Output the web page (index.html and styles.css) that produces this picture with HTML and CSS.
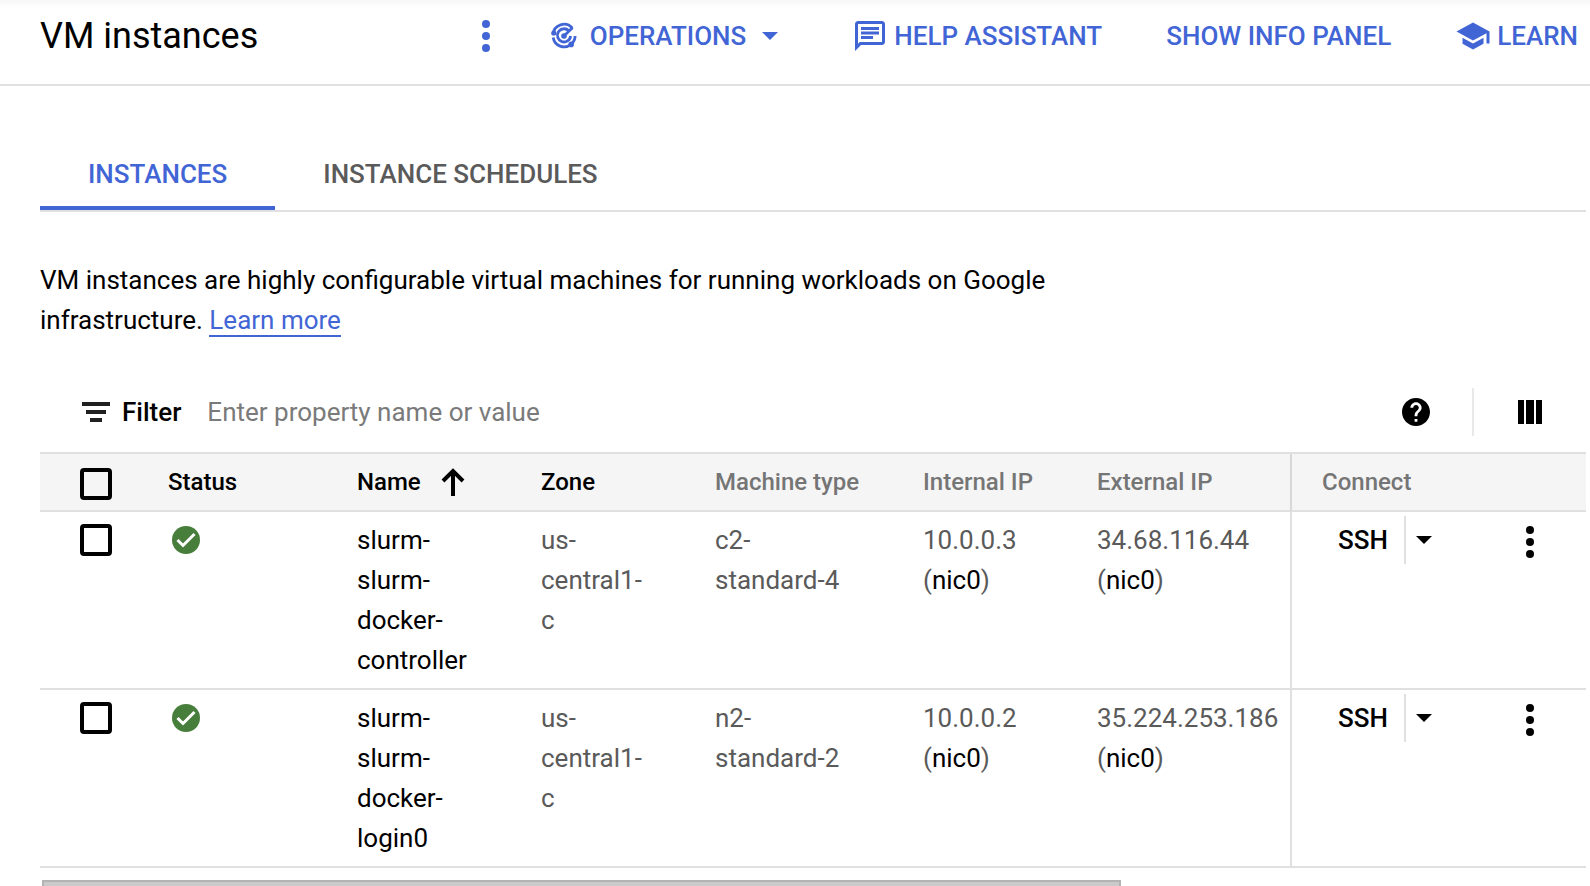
FILE: index.html
```html
<!DOCTYPE html>
<html lang="en">
<head>
<meta charset="utf-8">
<title>VM instances</title>
<link rel="stylesheet" href="styles.css">
</head>
<body>
<header class="topbar">
  <h1 class="title">VM instances</h1>
  <nav class="actions" aria-label="Page actions">
    <button class="action more" type="button" aria-label="More actions">
      <svg class="dots" viewBox="0 0 8 32" aria-hidden="true"><circle cx="4" cy="4" r="4"/><circle cx="4" cy="16" r="4"/><circle cx="4" cy="28" r="4"/></svg>
    </button>
    <button class="action menu" type="button">
      <svg class="icon" viewBox="0 0 36 36" aria-hidden="true">
        <g fill="none" stroke="currentColor" stroke-width="2.8">
          <path d="M26.300 10A11 11 0 0 0 7.100 16.500"/>
          <path d="M7.200 19.500A11 11 0 0 0 25 26.400"/>
          <path d="M25 26.400A11 11 0 0 0 29.100 18"/>
          <path d="M22.800 12.800A6.600 6.600 0 1 0 24.600 18"/>
          <path d="M18 18l8.600-8.400"/>
        </g>
        <circle cx="18" cy="18" r="2.800"/><circle cx="7.800" cy="15" r="2.600"/><circle cx="25.200" cy="26.400" r="2.800"/>
      </svg>
      <span>OPERATIONS</span>
      <svg class="caret" viewBox="0 0 32 32" aria-hidden="true"><path d="M8 12h16l-8 8z"/></svg>
    </button>
    <button class="action snug" type="button">
      <svg class="icon" viewBox="0 0 24 24" aria-hidden="true"><path d="M4 4h16v12H5.200L4 17.200V4m0-2c-1.100 0-1.990.9-1.990 2L2 22l4-4h14c1.100 0 2-.9 2-2V4c0-1.100-.9-2-2-2H4zm2 10h8v2H6v-2zm0-3h12v2H6V9zm0-3h12v2H6V6z"/></svg>
      <span>HELP ASSISTANT</span>
    </button>
    <button class="action" type="button">SHOW INFO PANEL</button>
    <button class="action snug" type="button">
      <svg class="icon" viewBox="0 0 24 24" aria-hidden="true"><path d="M5 13.180v4L12 21l7-3.820v-4L12 17l-7-3.820zM12 3L1 9l11 6 9-4.910V17h2V9L12 3z"/></svg>
      <span>LEARN</span>
    </button>
  </nav>
</header>
<main class="content">
  <div class="tabs" role="tablist">
    <button class="tab selected" type="button" role="tab" aria-selected="true">INSTANCES</button>
    <button class="tab" type="button" role="tab" aria-selected="false">INSTANCE SCHEDULES</button>
  </div>
  <p class="intro">VM instances are highly configurable virtual machines for running workloads on Google infrastructure. <a class="link" href="#">Learn more</a></p>
  <div class="filter">
    <svg class="filter-icon" viewBox="0 0 28 20" aria-hidden="true"><path d="M0 0h28v4H0zM4 8h20v4H4zM8 16h12v4H8z"/></svg>
    <label class="filter-label" for="filter">Filter</label>
    <input class="filter-input" id="filter" type="text" placeholder="Enter property name or value">
    <button class="tool help" type="button" aria-label="Help">
      <svg class="round" viewBox="2 2 20 20" aria-hidden="true"><path d="M12 2C6.480 2 2 6.480 2 12s4.480 10 10 10 10-4.480 10-10S17.520 2 12 2zm1 17h-2v-2h2v2zm2.070-7.750l-.9.920C13.450 12.900 13 13.500 13 15h-2v-.5c0-1.100.45-2.100 1.170-2.830l1.240-1.260c.37-.36.59-.86.59-1.410 0-1.100-.9-2-2-2s-2 .9-2 2H8c0-2.210 1.790-4 4-4s4 1.790 4 4c0 .88-.36 1.680-.93 2.250z" stroke="none"/></svg>
    </button>
    <button class="tool columns" type="button" aria-label="Column display options">
      <svg class="bars" viewBox="0 0 24 24" aria-hidden="true"><path d="M0 0h6v24H0zM8 0h8v24H8zM18 0h6v24h-6z"/></svg>
    </button>
  </div>
  <table class="grid">
    <colgroup><col class="c-check"><col class="c-status"><col class="c-name"><col class="c-zone"><col class="c-machine"><col class="c-internal"><col class="c-external"><col class="c-connect"></colgroup>
    <thead>
      <tr>
        <th class="check"><input class="box" type="checkbox" aria-label="Select all instances"></th>
        <th class="sortable">Status</th>
        <th class="sortable"><span class="sorted">Name <svg class="arrow" viewBox="0 0 24 28" aria-hidden="true"><path d="M12 28V3M2 13L12 3l10 10"/></svg></span></th>
        <th class="sortable">Zone</th>
        <th>Machine type</th>
        <th>Internal IP</th>
        <th>External IP</th>
        <th class="connect">Connect</th>
      </tr>
    </thead>
    <tbody>
      <tr>
        <td class="check"><input class="box" type="checkbox" aria-label="Select slurm-slurm-docker-controller"></td>
        <td><svg class="ok" viewBox="0 0 28 28" role="img" aria-label="Running"><circle cx="14" cy="14" r="14"/><path d="M5.500 14l5.500 5.500L22.500 8"/></svg></td>
        <td><a class="plain" href="#">slurm-slurm-docker-controller</a></td>
        <td>us-central1-c</td>
        <td>c2-standard-4</td>
        <td>10.0.0.3 (<a class="plain" href="#">nic0</a>)</td>
        <td class="external">34.68.116.44 (<a class="plain" href="#">nic0</a>)</td>
        <td class="connect">
          <div class="connect-tools">
            <button class="ssh" type="button">SSH</button>
            <button class="ssh-menu" type="button" aria-label="SSH options"><svg class="caret" viewBox="0 0 32 32" aria-hidden="true"><path d="M8 12h16l-8 8z"/></svg></button>
            <button class="row-menu" type="button" aria-label="More actions"><svg class="dots" viewBox="0 0 8 32" aria-hidden="true"><circle cx="4" cy="4" r="4"/><circle cx="4" cy="16" r="4"/><circle cx="4" cy="28" r="4"/></svg></button>
          </div>
        </td>
      </tr>
      <tr>
        <td class="check"><input class="box" type="checkbox" aria-label="Select slurm-slurm-docker-login0"></td>
        <td><svg class="ok" viewBox="0 0 28 28" role="img" aria-label="Running"><circle cx="14" cy="14" r="14"/><path d="M5.500 14l5.500 5.500L22.500 8"/></svg></td>
        <td><a class="plain" href="#">slurm-slurm-docker-login0</a></td>
        <td>us-central1-c</td>
        <td>n2-standard-2</td>
        <td>10.0.0.2 (<a class="plain" href="#">nic0</a>)</td>
        <td class="external">35.224.253.186 (<a class="plain" href="#">nic0</a>)</td>
        <td class="connect">
          <div class="connect-tools">
            <button class="ssh" type="button">SSH</button>
            <button class="ssh-menu" type="button" aria-label="SSH options"><svg class="caret" viewBox="0 0 32 32" aria-hidden="true"><path d="M8 12h16l-8 8z"/></svg></button>
            <button class="row-menu" type="button" aria-label="More actions"><svg class="dots" viewBox="0 0 8 32" aria-hidden="true"><circle cx="4" cy="4" r="4"/><circle cx="4" cy="16" r="4"/><circle cx="4" cy="28" r="4"/></svg></button>
          </div>
        </td>
      </tr>
    </tbody>
  </table>
  <div class="scroll-track"><div class="scroll-thumb"></div></div>
</main>
</body>
</html>
```
FILE: styles.css
```css
* { box-sizing: border-box; }
html { height: 100%; overflow: hidden; }
body {
  height: 100%;
  margin: 0;
  overflow: hidden;
  background: #fff;
  color: #000;
  font: 400 26px/40px Roboto, sans-serif;
}
button {
  padding: 0;
  border: 0;
  background: none;
  color: inherit;
  font: inherit;
  cursor: pointer;
}
svg { display: block; flex: none; fill: currentColor; }

.topbar {
  display: flex;
  align-items: center;
  justify-content: space-between;
  padding: 0 12px 12px 40px;
  border-bottom: 2px solid #e0e0e0;
  background: linear-gradient(#f7f7f7, #fff 8px);
}
.title { margin: 0; font-size: 36px; font-weight: 400; line-height: 72px; white-space: nowrap; }
.actions { display: flex; align-items: center; gap: 64px; color: #4265d6; }
.action { display: flex; align-items: center; gap: 8px; font-weight: 500; white-space: nowrap; }
.action.snug { gap: 6px; }
.action.menu { padding-right: 2px; }
.more { margin-right: -8px; }
.icon { width: 36px; height: 36px; }
.caret { width: 32px; height: 32px; }
.dots { width: 8px; height: 32px; }

.content { padding: 56px 4px 0 40px; }
.tabs { display: flex; border-bottom: 2px solid #e0e0e0; }
.tab {
  padding: 12px 48px;
  border-bottom: 4px solid transparent;
  color: #5a5a5a;
  font-weight: 500;
}
.tab.selected { border-color: #4265d6; color: #4265d6; }
.intro { max-width: 1040px; margin: 48px 0 32px; }
.link { border-bottom: 2px solid #4265d6; color: #4265d6; text-decoration: none; }
.plain { color: #000; text-decoration: none; }

.filter { display: flex; align-items: center; height: 80px; padding-left: 42px; }
.filter-icon { width: 28px; height: 20px; fill: #212121; }
.filter-label { padding: 0 26px 0 12px; font-weight: 500; }
.filter-input { flex: 1; min-width: 0; padding: 0; border: 0; outline: 0; font: inherit; }
.filter-input::placeholder { color: #7a7a7a; opacity: 1; }
.tool { display: flex; align-items: center; height: 48px; }
.help { padding-right: 42px; }
.columns { padding: 0 44px; border-left: 2px solid #e8e8e8; }
.round { width: 28px; height: 28px; }
.bars { width: 24px; height: 24px; }

.grid { width: 100%; border-collapse: separate; border-spacing: 0; table-layout: fixed; border-top: 2px solid #e0e0e0; }
.c-check { width: 116px; }
.c-status { width: 189px; }
.c-name { width: 184px; }
.c-zone { width: 174px; }
.c-machine { width: 208px; }
.c-internal { width: 174px; }
.c-connect { width: 296px; }
th, td { border-bottom: 2px solid #e0e0e0; text-align: left; }
th {
  height: 58px;
  padding: 0 0 0 12px;
  background: #f5f5f5;
  color: #757575;
  font-size: 24px;
  font-weight: 500;
  white-space: nowrap;
}
td { padding: 8px 56px 8px 12px; color: #5a5a5a; vertical-align: top; }
.sortable { color: #000; }
.sorted { display: flex; align-items: center; gap: 20px; }
.arrow { width: 24px; height: 28px; fill: none; stroke: #000; stroke-width: 4; }
.external { padding-right: 8px; }
th.check, td.check { padding: 12px 0 0 40px; vertical-align: top; }
th.check { padding-top: 14px; }
.box {
  display: block;
  appearance: none;
  width: 32px;
  height: 32px;
  margin: 0;
  border: 4px solid #000;
  border-radius: 4px;
}
.ok { width: 28px; height: 28px; margin: 6px 4px; fill: #487e3b; }
.ok path { fill: none; stroke: #fff; stroke-width: 3; }
th.connect { padding-left: 30px; border-left: 2px solid #d8d8d8; }
td.connect { padding: 4px 52px 0 46px; border-left: 2px solid #e0e0e0; }
.connect-tools { display: flex; align-items: center; color: #000; }
.ssh { padding: 4px 16px 4px 0; font-weight: 500; }
.ssh-menu { display: flex; align-items: center; height: 48px; padding-left: 2px; border-left: 2px solid #e0e0e0; }
.row-menu { margin-left: auto; padding-top: 4px; }

.scroll-track { margin-top: 12px; padding: 0 2px; }
.scroll-thumb { width: 70%; height: 16px; border: 2px solid #b3b3b3; background: #cacaca; }
```
